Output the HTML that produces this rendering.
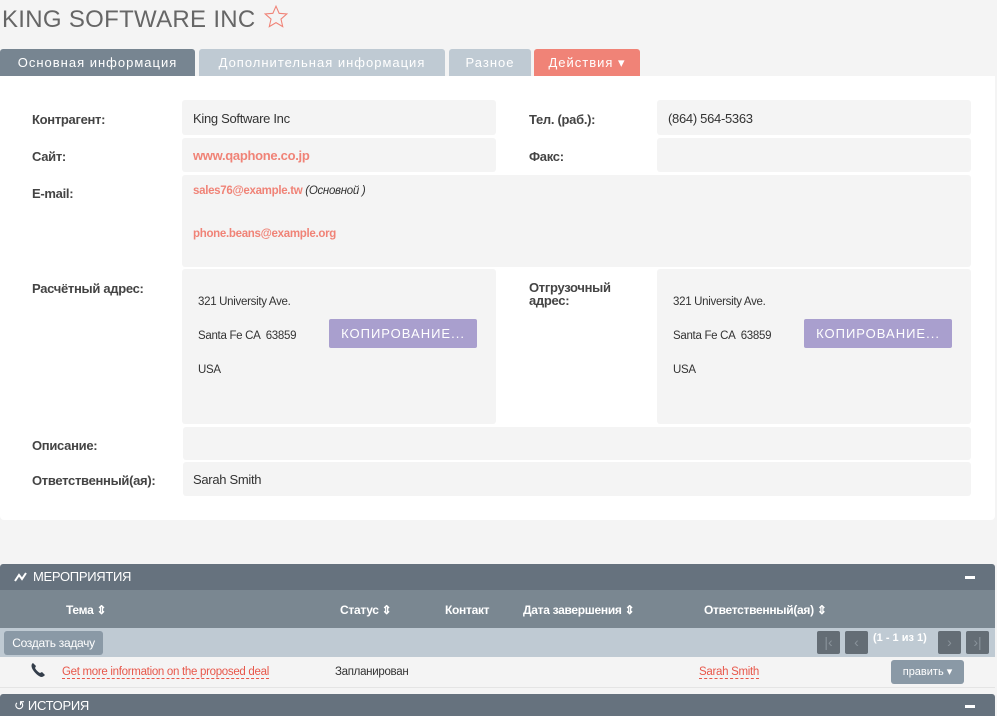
<!DOCTYPE html><html><head><meta charset="utf-8"><style>
*{box-sizing:border-box;margin:0;padding:0}
body{width:997px;height:716px;overflow:hidden;background:#f4f4f4;font-family:"Liberation Sans",sans-serif;position:relative;color:#333}
.a{position:absolute}
.t{font-size:13px;letter-spacing:1px;color:#fff;height:27px;line-height:27px;text-align:center;border-radius:3px 3px 0 0}
.l{font-size:13px;font-weight:bold;color:#444;letter-spacing:-0.3px}
.c{background:#f4f4f4;border-radius:3px}
.v{font-size:13px;letter-spacing:-0.3px}
.r{color:#f08377}
.s{font-size:11.5px;letter-spacing:-0.3px}
.btn{background:#a99fce;color:#fff;font-size:13px;letter-spacing:1px;text-align:center;line-height:29px;border-radius:2px}
.h{font-size:12px;font-weight:bold;color:#fff;letter-spacing:-0.3px}
.pg{background:#646d75;width:23px;height:23px;border-radius:2px;color:#8a939b;text-align:center;line-height:23px;font-size:14px}
</style></head><body>
<div class="a" style="left:2px;top:6px;font-size:24px;color:#666;letter-spacing:0.3px">KING SOFTWARE INC</div>
<svg class="a" style="left:263px;top:4px" width="26" height="26" viewBox="0 0 24 24"><path d="M12 2l2.9 6.6 7.1.6-5.4 4.7 1.6 7-6.2-3.7-6.2 3.7 1.6-7L2 9.2l7.1-.6z" fill="none" stroke="#f08377" stroke-width="1"/></svg>
<div class="a t" style="left:0;top:49px;width:195px;background:#778591">Основная информация</div>
<div class="a t" style="left:199px;top:49px;width:246px;background:#bfcad3">Дополнительная информация</div>
<div class="a t" style="left:449px;top:49px;width:82px;background:#bfcad3">Разное</div>
<div class="a t" style="left:534px;top:49px;width:106px;background:#f08377">Действия ▾</div>
<div class="a" style="left:0;top:76px;width:995px;height:444px;background:#fff;border-radius:0 0 4px 4px"></div>
<div class="a l" style="left:32px;top:112px">Контрагент:</div>
<div class="a c" style="left:182px;top:100px;width:314px;height:35px"></div>
<div class="a v" style="left:193px;top:111px">King Software Inc</div>
<div class="a l" style="left:529px;top:112px">Тел. (раб.):</div>
<div class="a c" style="left:657px;top:100px;width:314px;height:35px"></div>
<div class="a v" style="left:668px;top:111px">(864) 564-5363</div>
<div class="a l" style="left:32px;top:149px">Сайт:</div>
<div class="a c" style="left:182px;top:138px;width:314px;height:34px"></div>
<div class="a v r" style="left:193px;top:148px;font-weight:bold">www.qaphone.co.jp</div>
<div class="a l" style="left:529px;top:149px">Факс:</div>
<div class="a c" style="left:657px;top:138px;width:314px;height:34px"></div>
<div class="a l" style="left:32px;top:186px">E-mail:</div>
<div class="a c" style="left:182px;top:175px;width:789px;height:92px"></div>
<div class="a s" style="left:193px;top:185px"><span class="r" style="font-weight:bold">sales76@example.tw</span> <i>(Основной )</i></div>
<div class="a s r" style="left:193px;top:228px;font-weight:bold">phone.beans@example.org</div>
<div class="a l" style="left:32px;top:281px">Расчётный адрес:</div>
<div class="a c" style="left:182px;top:269px;width:314px;height:155px"></div>
<div class="a s" style="left:198px;top:285px;line-height:34px">321 University Ave.<br>Santa Fe CA &nbsp;63859<br>USA</div>
<div class="a btn" style="left:329px;top:319px;width:148px">КОПИРОВАНИЕ...</div>
<div class="a l" style="left:529px;top:281px;line-height:13px">Отгрузочный<br>адрес:</div>
<div class="a c" style="left:657px;top:269px;width:314px;height:155px"></div>
<div class="a s" style="left:673px;top:285px;line-height:34px">321 University Ave.<br>Santa Fe CA &nbsp;63859<br>USA</div>
<div class="a btn" style="left:804px;top:319px;width:148px">КОПИРОВАНИЕ...</div>
<div class="a l" style="left:32px;top:438px">Описание:</div>
<div class="a c" style="left:183px;top:427px;width:788px;height:33px"></div>
<div class="a l" style="left:32px;top:473px">Ответственный(ая):</div>
<div class="a c" style="left:183px;top:462px;width:788px;height:34px"></div>
<div class="a v" style="left:193px;top:472px">Sarah Smith</div>

<div class="a" style="left:0;top:564px;width:995px;height:26px;background:#66727e;border-radius:3px 3px 0 0"></div>
<svg class="a" style="left:14px;top:571px" width="14" height="12" viewBox="0 0 14 12"><path d="M1 10L5 4l3 4 4-6" fill="none" stroke="#fff" stroke-width="2"/></svg>
<div class="a" style="left:33px;top:569px;color:#fff;font-size:13px;letter-spacing:-0.3px">МЕРОПРИЯТИЯ</div>
<div class="a" style="left:965px;top:576px;width:10px;height:3px;background:#fff"></div>
<div class="a" style="left:0;top:590px;width:995px;height:38px;background:#7a8791"></div>
<div class="a h" style="left:66px;top:603px">Тема ⇕</div>
<div class="a h" style="left:340px;top:603px">Статус ⇕</div>
<div class="a h" style="left:445px;top:603px">Контакт</div>
<div class="a h" style="left:523px;top:603px">Дата завершения ⇕</div>
<div class="a h" style="left:704px;top:603px">Ответственный(ая) ⇕</div>
<div class="a" style="left:0;top:628px;width:995px;height:29px;background:#bfcad3"></div>
<div class="a" style="left:4px;top:631px;width:99px;height:24px;background:#8a99a6;border-radius:3px;color:#fff;font-size:12px;line-height:24px;text-align:center;letter-spacing:-0.3px">Создать задачу</div>
<div class="a pg" style="left:817px;top:631px">|‹</div>
<div class="a pg" style="left:845px;top:631px">‹</div>
<div class="a" style="left:873px;top:632px;color:#fff;font-size:11px;font-weight:bold">(1 - 1 из 1)</div>
<div class="a pg" style="left:938px;top:631px">›</div>
<div class="a pg" style="left:966px;top:631px">›|</div>
<div class="a" style="left:0;top:657px;width:995px;height:31px;background:#f4f4f4;border-bottom:1px solid #e4e4e4"></div>
<svg class="a" style="left:30px;top:662px" width="16" height="16" viewBox="0 0 16 16"><path d="M3 1c-2 1-2 4 0 7s5 6 8 7c2 0 3-1 4-2l-3-3-2 1C8 10 6 8 5 6l1-2z" fill="#333d4a"/></svg>
<div class="a s" style="left:62px;top:666px;color:#e8574a;border-bottom:1px dashed #e8574a">Get more information on the proposed deal</div>
<div class="a s" style="left:335px;top:666px">Запланирован</div>
<div class="a s" style="left:699px;top:666px;color:#e8574a;border-bottom:1px dashed #e8574a">Sarah Smith</div>
<div class="a" style="left:891px;top:660px;width:73px;height:24px;background:#8a99a6;border-radius:3px;color:#fff;font-size:11px;line-height:24px;text-align:center">править ▾</div>
<div class="a" style="left:0;top:694px;width:995px;height:22px;background:#66727e;border-radius:3px 3px 0 0"></div>
<div class="a" style="left:14px;top:698px;color:#fff;font-size:13px;letter-spacing:-0.3px">↺ ИСТОРИЯ</div>
<div class="a" style="left:965px;top:705px;width:10px;height:3px;background:#fff"></div>
</body></html>
